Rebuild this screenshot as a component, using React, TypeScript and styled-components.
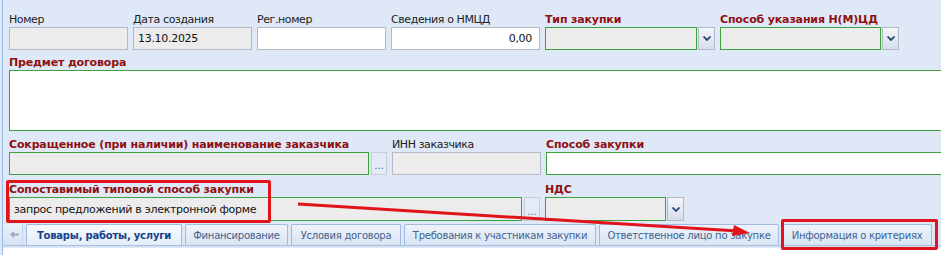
import styled, { createGlobalStyle } from "styled-components";

const GlobalStyle = createGlobalStyle`
  html, body {
    margin: 0;
    padding: 0;
  }
  body {
    background: #dfe8f6;
    font-family: "DejaVu Sans", Tahoma, Verdana, sans-serif;
    overflow: hidden;
  }
`;

const Page = styled.div`
  position: relative;
  width: 941px;
  height: 255px;
  overflow: hidden;
  padding-left: 2px;
  box-sizing: border-box;
`;

const Panel = styled.div`
  width: 980px;
  height: 100%;
  border-left: 1px solid #99bbe8;
  padding-top: 12px;
  box-sizing: border-box;
`;

const Form = styled.div`
  padding-left: 6px;
`;

const Row = styled.div<{ $top?: number }>`
  display: flex;
  align-items: flex-end;
  gap: 5px;
  margin-top: ${(p) => p.$top ?? 0}px;
`;

const Field = styled.div<{ $w?: number }>`
  display: flex;
  flex-direction: column;
  width: ${(p) => (p.$w ? `${p.$w}px` : "auto")};
  flex: ${(p) => (p.$w ? "none" : "1 1 auto")};
`;

const Label = styled.div<{ $req?: boolean }>`
  height: 15px;
  line-height: 15px;
  font-size: 11px;
  white-space: nowrap;
  color: ${(p) => (p.$req ? "#8f1010" : "#222")};
  font-weight: ${(p) => (p.$req ? "bold" : "normal")};
  letter-spacing: ${(p) => (p.$req ? "-0.15px" : "-0.4px")};
`;

const Line = styled.div`
  display: flex;
`;

const Input = styled.div<{
  $h?: number;
  $tone?: "gray" | "white";
  $green?: boolean;
  $right?: boolean;
}>`
  flex: 1 1 auto;
  min-width: 0;
  height: ${(p) => p.$h ?? 23}px;
  box-sizing: border-box;
  border: 1px solid ${(p) => (p.$green ? "#3ca33c" : "#b5b8c8")};
  background: ${(p) => (p.$tone === "gray" ? "#ececec" : "#fff")};
  display: flex;
  align-items: center;
  justify-content: ${(p) => (p.$right ? "flex-end" : "flex-start")};
  padding: 0 7px 0 4px;
  font-size: 11px;
  letter-spacing: -0.3px;
  color: #111;
  white-space: nowrap;
`;

const Trigger = styled.div<{ $h?: number }>`
  width: 17px;
  height: ${(p) => p.$h ?? 23}px;
  box-sizing: border-box;
  margin-left: 1px;
  border: 1px solid #b5b8c8;
  background: linear-gradient(#f4f6fa, #d6deea);
  display: flex;
  align-items: center;
  justify-content: center;
`;

const DotsButton = styled.div<{ $h?: number }>`
  width: 16px;
  height: ${(p) => p.$h ?? 23}px;
  box-sizing: border-box;
  margin-left: 2px;
  border: 1px solid #c3cddb;
  background: #e4ebf5;
  color: #4a6a9a;
  font-size: 10px;
  display: flex;
  align-items: flex-end;
  justify-content: center;
  padding-bottom: 4px;
  line-height: 8px;
`;

const TabStrip = styled.div`
  margin-top: 2px;
  display: flex;
  align-items: flex-end;
  gap: 3px;
  height: 22px;
  border-bottom: 1px solid #a9c0e2;
  box-shadow: 0 1px 0 #d4e0f1;
`;

const Scroller = styled.div`
  width: 20px;
  height: 21px;
  display: flex;
  align-items: center;
  justify-content: flex-end;
  padding-right: 3px;
  box-sizing: border-box;
  background: linear-gradient(#eaf0f9, #d7e3f3);
  border-right: 1px solid #c5d5ec;
`;

const Tab = styled.div<{ $w: number; $active?: boolean }>`
  width: ${(p) => p.$w}px;
  height: 21px;
  box-sizing: border-box;
  border: 1px solid #9fbbe2;
  border-bottom: none;
  border-radius: 2px 2px 0 0;
  background: ${(p) =>
    p.$active
      ? "linear-gradient(#f7faff, #e4edf9)"
      : "linear-gradient(#eef3fa, #d8e4f4)"};
  color: ${(p) => (p.$active ? "#15428b" : "#416390")};
  font-weight: ${(p) => (p.$active ? "bold" : "normal")};
  font-size: 10px;
  letter-spacing: ${(p) => (p.$active ? "-0.2px" : "-0.25px")};
  display: flex;
  align-items: center;
  justify-content: center;
  white-space: nowrap;
`;

const TabBody = styled.div`
  margin-top: 2px;
  height: 20px;
  background: #fff;
`;

const Callout = styled.div<{ $x: number; $y: number; $w: number; $h: number }>`
  position: absolute;
  left: ${(p) => p.$x}px;
  top: ${(p) => p.$y}px;
  width: ${(p) => p.$w}px;
  height: ${(p) => p.$h}px;
  box-sizing: border-box;
  border: 3px solid #e0141a;
  border-radius: 2px;
  pointer-events: none;
`;

const ArrowLayer = styled.svg`
  position: absolute;
  left: 0;
  top: 0;
  pointer-events: none;
`;

function Chevron() {
  return (
    <svg width="8" height="5" viewBox="0 0 8 5">
      <path d="M0.5 0.5 L4 4 L7.5 0.5" fill="none" stroke="#2b4a7a" strokeWidth="1.8" />
    </svg>
  );
}

const tabs = [
  { title: "Товары, работы, услуги", w: 156, active: true },
  { title: "Финансирование", w: 103 },
  { title: "Условия договора", w: 110 },
  { title: "Требования к участникам закупки", w: 192 },
  { title: "Ответственное лицо по закупке", w: 180 },
  { title: "Информация о критериях", w: 150 },
];

export default function App() {
  return (
    <>
      <GlobalStyle />
      <Page>
        <Panel>
          <Form>
            <Row>
              <Field $w={119}>
                <Label>Номер</Label>
                <Input $tone="gray" />
              </Field>
              <Field $w={119}>
                <Label>Дата создания</Label>
                <Input $tone="gray">13.10.2025</Input>
              </Field>
              <Field $w={129}>
                <Label>Рег.номер</Label>
                <Input />
              </Field>
              <Field $w={149}>
                <Label>Сведения о НМЦД</Label>
                <Input $right>0,00</Input>
              </Field>
              <Field $w={170}>
                <Label $req>Тип закупки</Label>
                <Line>
                  <Input $tone="gray" $green />
                  <Trigger>
                    <Chevron />
                  </Trigger>
                </Line>
              </Field>
              <Field $w={179}>
                <Label $req>Способ указания Н(М)ЦД</Label>
                <Line>
                  <Input $tone="gray" $green />
                  <Trigger>
                    <Chevron />
                  </Trigger>
                </Line>
              </Field>
            </Row>

            <Row $top={5}>
              <Field>
                <Label $req>Предмет договора</Label>
                <Input $green $h={61} />
              </Field>
            </Row>

            <Row $top={6}>
              <Field $w={378}>
                <Label $req>Сокращенное (при наличии) наименование заказчика</Label>
                <Line>
                  <Input $tone="gray" $green />
                  <DotsButton>...</DotsButton>
                </Line>
              </Field>
              <Field $w={149}>
                <Label>ИНН заказчика</Label>
                <Input $tone="gray" />
              </Field>
              <Field>
                <Label $req>Способ закупки</Label>
                <Input $green />
              </Field>
            </Row>

            <Row $top={7}>
              <Field $w={531}>
                <Label $req>Сопоставимый типовой способ закупки</Label>
                <Line>
                  <Input $tone="gray" $green $h={24}>
                    запрос предложений в электронной форме
                  </Input>
                  <DotsButton $h={24}>...</DotsButton>
                </Line>
              </Field>
              <Field $w={139}>
                <Label $req>НДС</Label>
                <Line>
                  <Input $tone="gray" $green $h={24} />
                  <Trigger $h={24}>
                    <Chevron />
                  </Trigger>
                </Line>
              </Field>
            </Row>
          </Form>

          <TabStrip>
            <Scroller>
              <svg width="9" height="7" viewBox="0 0 9 7">
                <path d="M0 3.5 L4 0 L4 2.5 L9 2.5 L9 4.5 L4 4.5 L4 7 Z" fill="#9aa9bd" />
              </svg>
            </Scroller>
            {tabs.map((t) => (
              <Tab key={t.title} $w={t.w} $active={t.active}>
                {t.title}
              </Tab>
            ))}
          </TabStrip>
          <TabBody />
        </Panel>

        <Callout $x={6} $y={180} $w={265} $h={43} />
        <Callout $x={781} $y={219} $w={157} $h={31} />
        <ArrowLayer width="941" height="255" viewBox="0 0 941 255">
          <line x1="298" y1="204" x2="738" y2="231" stroke="#e0141a" strokeWidth="3" />
          <path d="M750 233 L734 225 L732 236 Z" fill="#e0141a" />
        </ArrowLayer>
      </Page>
    </>
  );
}
